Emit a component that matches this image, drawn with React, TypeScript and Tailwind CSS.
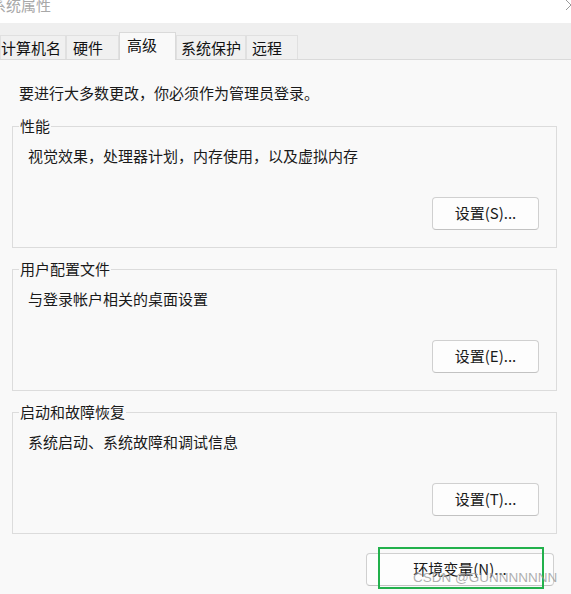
import React from 'react';

const tabs = [
  { label: '计算机名', w: 'w-[66px]', pl: 'pl-0' },
  { label: '硬件', w: 'w-[53px]', pl: 'pl-[6px]' },
  { label: '高级', w: 'w-[57px]', pl: 'pl-[7px]', active: true },
  { label: '系统保护', w: 'w-[70px]', pl: 'pl-[4px]' },
  { label: '远程', w: 'w-[52px]', pl: 'pl-[5px]' }
];

const groups = [
  { title: '性能', desc: '视觉效果，处理器计划，内存使用，以及虚拟内存', btn: '设置(S)...' },
  { title: '用户配置文件', desc: '与登录帐户相关的桌面设置', btn: '设置(E)...' },
  { title: '启动和故障恢复', desc: '系统启动、系统故障和调试信息', btn: '设置(T)...' }
];

const Button: React.FC<{ label: string; className?: string }> = ({ label, className }) => (
  <div
    className={`h-[33px] flex items-center justify-center rounded-[4px] border border-[#d0d0d0] border-b-[#c2c2c2] bg-[#fdfdfd] text-[#1a1a1a] ${className ?? ''}`}
  >
    {label}
  </div>
);

export default function App() {
  return (
    <div className="relative w-[571px] h-[594px] overflow-hidden bg-[#f9f9f9] font-['Noto_Sans_CJK_SC','Microsoft_YaHei',sans-serif] text-[15px] text-[#1a1a1a]">
      {/* title bar */}
      <div className="relative h-[23px] overflow-hidden bg-white">
        <div className="-ml-[9px] -mt-[6px] leading-[22px] text-[15px] text-[#a8a8a8]">系统属性</div>
        <svg className="absolute right-0 top-0" width="6" height="11" viewBox="0 0 6 11">
          <path d="M1 0 L6 5 M1 10 L6 5" stroke="#9a9a9a" strokeWidth="1" fill="none" />
        </svg>
      </div>

      {/* tab strip */}
      <div className="h-[37px] bg-[#efefef] flex items-end border-b border-[#dadada]">
        {tabs.map(t =>
          t.active ? (
            <div
              key={t.label}
              className={`${t.w} ${t.pl} h-[28px] -mb-px bg-[#f9f9f9] border border-b-0 border-[#dadada] leading-[24px] text-[#111]`}
            >
              {t.label}
            </div>
          ) : (
            <div
              key={t.label}
              className={`${t.w} ${t.pl} h-[24px] bg-[#f0f0f0] border border-b-0 border-[#e0e0e0] leading-[24px] text-[#111]`}
            >
              {t.label}
            </div>
          )
        )}
      </div>

      {/* content */}
      <div className="pt-[23px]">
        <div className="pl-[19px] leading-[20px]">要进行大多数更改，你必须作为管理员登录。</div>

        <div className="mt-[13px] flex flex-col gap-[11px]">
          {groups.map(g => (
            <fieldset key={g.title} className="ml-[12px] mr-[14px] border border-[#dcdcdc] pl-[15px] pr-[17px] pb-[17px]">
              <legend className="ml-[-9px] px-[1px] leading-[20px]">{g.title}</legend>
              <div className="mt-[10px] leading-[20px]">{g.desc}</div>
              <div className="mt-[31px] flex justify-end">
                <Button label={g.btn} className="w-[107px]" />
              </div>
            </fieldset>
          ))}
        </div>

        <div className="mt-[19px] flex justify-end pr-[17px]">
          <Button label="环境变量(N)..." className="w-[188px] h-[32px]" />
        </div>
      </div>

      {/* annotation overlay */}
      <div className="absolute left-[378px] top-[547px] w-[166px] h-[42px] border-2 border-[#22b14c]" />
      <div className="absolute left-[413px] top-[568px] text-[13.5px] leading-[20px] text-[#9a9a9a]/80 font-['Liberation_Sans',sans-serif]">
        CSDN @GUNNNNNNN
      </div>
    </div>
  );
}
